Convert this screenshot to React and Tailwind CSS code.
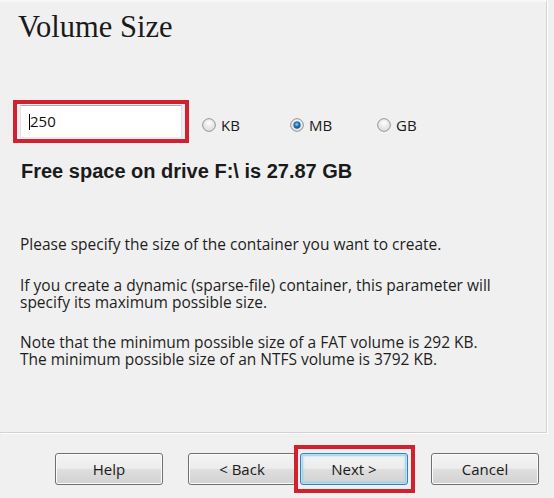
import React from "react";

const ui = { fontFamily: '"Open Sans", "Noto Sans", sans-serif' };

function Radio({ checked }) {
  return (
    <svg width="14" height="14" viewBox="0 0 14 14" className="shrink-0">
      <defs>
        <radialGradient id="rg-bg" cx="50%" cy="35%" r="65%">
          <stop offset="0%" stopColor="#ffffff" />
          <stop offset="100%" stopColor="#d6d6d6" />
        </radialGradient>
        <radialGradient id="rg-dot" cx="45%" cy="40%" r="60%">
          <stop offset="0%" stopColor="#8fd0f5" />
          <stop offset="55%" stopColor="#2a78b5" />
          <stop offset="100%" stopColor="#0f4d85" />
        </radialGradient>
      </defs>
      <circle cx="7" cy="7" r="6.3" fill="url(#rg-bg)" stroke="#8d8d8d" strokeWidth="1" />
      <circle cx="7" cy="7" r="5" fill="none" stroke="#eeeeee" strokeWidth="0.8" />
      {checked && <circle cx="7" cy="7" r="3.4" fill="url(#rg-dot)" stroke="#1d5f96" strokeWidth="0.5" />}
    </svg>
  );
}

function Btn({ children, focused }) {
  return (
    <div
      className={
        "w-[108px] h-[32px] rounded-[3px] border flex items-center justify-center text-[15px] text-[#1a1a1a] bg-[linear-gradient(to_bottom,#f4f4f4_0%,#ececec_48%,#dedede_52%,#d2d2d2_100%)] " +
        (focused
          ? "border-[#3c7fb1] shadow-[inset_0_0_0_1px_#b6e2f6,inset_0_0_2px_2px_#8fd0ee]"
          : "border-[#707070] shadow-[inset_0_0_0_1px_#fbfbfb]")
      }
      style={ui}
    >
      {children}
    </div>
  );
}

export default function App() {
  return (
    <div className="w-[554px] h-[498px] bg-[#f0f0f0] overflow-hidden flex flex-col" style={ui}>
      <div className="w-[547px] h-[433px] border-r border-b border-[#d2d2d2] shadow-[1px_1px_0_#ffffff] border-t-2 border-t-[#f8f8f8] flex flex-col pl-[20px] shrink-0">
        <div
          className="mt-[8px] -ml-[2px] text-[30.5px] leading-[34px] text-[#1a1a1a]"
          style={{ fontFamily: '"Liberation Serif", "Times New Roman", serif' }}
        >
          Volume Size
        </div>

        <div className="mt-[56px] -ml-[7px] flex items-start">
          <div className="w-[176px] h-[43px] border-4 border-[#d3202e] px-[3px] py-[1px]">
            <div className="w-full h-full bg-white border border-[#abadb3] border-l-[#e2e3ea] border-r-[#dbdfe6] border-b-[#e3e9ef] flex items-center pl-[8px]">
              <div className="w-px h-[16px] bg-black" />
              <span className="text-[15px] leading-none text-[#111]">250</span>
            </div>
          </div>
          <div className="flex items-center h-[43px] pt-[7px] ml-[13px] text-[15px] text-[#1a1a1a]">
            <div className="w-[88px] flex items-center gap-[5px]">
              <Radio />
              <span>KB</span>
            </div>
            <div className="w-[87px] flex items-center gap-[5px]">
              <Radio checked />
              <span>MB</span>
            </div>
            <div className="flex items-center gap-[5px]">
              <Radio />
              <span>GB</span>
            </div>
          </div>
        </div>

        <div
          className="mt-[17px] ml-[1px] text-[20px] leading-[22px] font-bold text-[#1a1a1a]"
          style={{ fontFamily: '"Liberation Sans", Arial, sans-serif' }}
        >
          Free space on drive F:\ is 27.87 GB
        </div>

        <div className="mt-[54px] text-[15.5px] leading-[17px] text-[#1e1e1e]">
          <p>Please specify the size of the container you want to create.</p>
          <p className="mt-[24px]">
            If you create a dynamic (sparse-file) container, this parameter will
            <br />
            specify its maximum possible size.
          </p>
          <p className="mt-[23px]">
            Note that the minimum possible size of a FAT volume is 292 KB.
            <br />
            The minimum possible size of an NTFS volume is 3792 KB.
          </p>
        </div>
      </div>

      <div className="mt-[12px] h-[48px] flex items-center pl-[55px]">
        <Btn>Help</Btn>
        <div className="ml-[25px]">
          <Btn>&lt; Back</Btn>
        </div>
        <div className="relative -ml-[2px] w-[121px] h-[48px] border-4 border-[#d3202e] pl-[2px] pr-[3px] py-[4px]">
          <Btn focused>Next &gt;</Btn>
        </div>
        <div className="ml-[16px]">
          <Btn>Cancel</Btn>
        </div>
      </div>
    </div>
  );
}
